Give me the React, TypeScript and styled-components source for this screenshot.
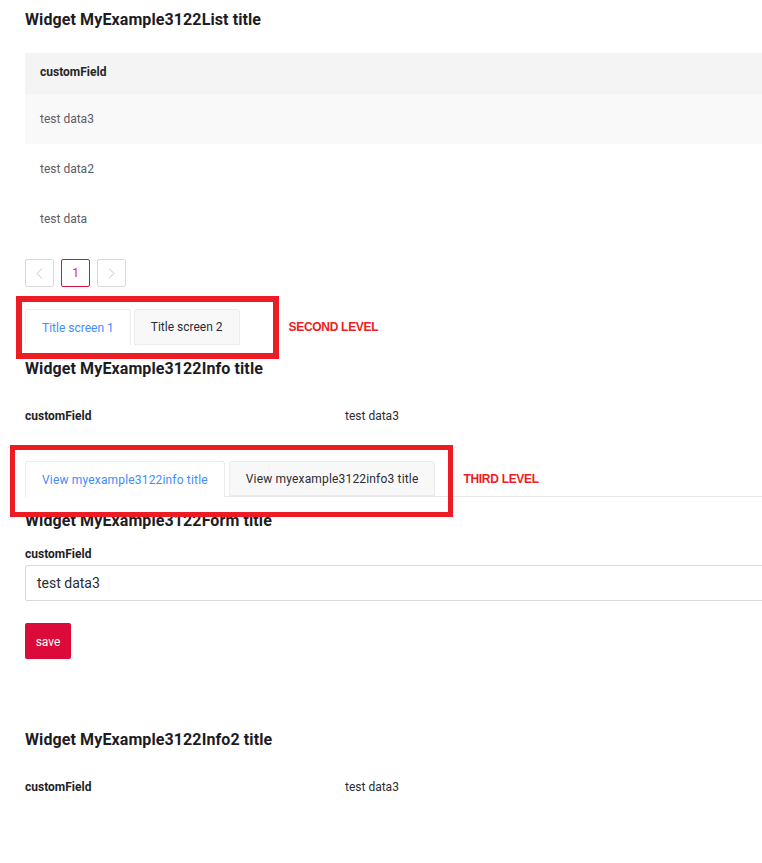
import React from "react";
import styled, { createGlobalStyle } from "styled-components";

const GlobalStyle = createGlobalStyle`
  html, body {
    margin: 0;
    padding: 0;
    background: #ffffff;
    overflow-x: hidden;
  }
  body {
    font-family: Roboto, "Liberation Sans", Arial, sans-serif;
    color: #262626;
  }
  * { box-sizing: border-box; }
`;

const Page = styled.div`
  width: 820px;
  padding: 8px 0 60px 25px;
  display: flex;
  flex-direction: column;
`;

const WidgetTitle = styled.h2<{ $mt?: number }>`
  margin: ${(p) => p.$mt ?? 0}px 0 0 0;
  font-size: 16px;
  line-height: 24px;
  font-weight: 700;
  letter-spacing: 0.1px;
  color: #1c1c24;
`;

const Table = styled.div`
  margin-top: 21px;
  display: flex;
  flex-direction: column;
`;

const HeaderRow = styled.div`
  height: 41px;
  background: #f4f4f4;
  display: flex;
  align-items: center;
  padding: 0 0 3px 15px;
  font-size: 12px;
  font-weight: 700;
  color: #262626;
  border-radius: 2px 0 0 0;
`;

const BodyRow = styled.div<{ $striped?: boolean }>`
  height: 50px;
  background: ${(p) => (p.$striped ? "#f9f9f9" : "#ffffff")};
  display: flex;
  align-items: center;
  padding-left: 15px;
  font-size: 12px;
  color: #5c5c66;
`;

const Pagination = styled.div`
  margin-top: 15px;
  display: flex;
  gap: 7px;
`;

const PageButton = styled.div<{ $active?: boolean }>`
  width: 29px;
  height: 28px;
  border: 1px solid ${(p) => (p.$active ? "#d0143c" : "#d9d9d9")};
  border-radius: 2px;
  display: flex;
  align-items: center;
  justify-content: center;
  font-size: 12px;
  color: ${(p) => (p.$active ? "#e0245e" : "#bfbfbf")};
  background: #fff;
`;

const TabsArea = styled.div<{ $mt: number }>`
  position: relative;
  margin-top: ${(p) => p.$mt}px;
`;

const TabBar = styled.div<{ $line?: boolean }>`
  display: flex;
  align-items: flex-end;
  height: 36px;
  border-bottom: ${(p) => (p.$line ? "1px solid #e8e8e8" : "none")};
`;

const Tab = styled.div<{ $active?: boolean; $line?: boolean }>`
  height: ${(p) => (p.$line ? (p.$active ? "36px" : "35px") : "36px")};
  margin-bottom: ${(p) => (p.$line && p.$active ? "-1px" : "0")};
  margin-right: ${(p) => (p.$line ? "4px" : "3px")};
  padding: 0 16px;
  display: flex;
  align-items: center;
  font-size: 12px;
  letter-spacing: ${(p) => (p.$line ? "0.17px" : "0")};
  border: 1px solid #ececec;
  border-bottom: ${(p) => (p.$active ? "none" : "1px solid #ececec")};
  border-radius: 3px 3px 0 0;
  background: ${(p) => (p.$active ? "#ffffff" : "#f8f8f8")};
  color: ${(p) => (p.$active ? "#3f8cff" : "#2b2b33")};
`;

const LevelLabel = styled.div<{ $ml: number }>`
  align-self: center;
  margin-left: ${(p) => p.$ml}px;
  font-family: "Liberation Sans", Arial, sans-serif;
  font-weight: 700;
  font-size: 12px;
  letter-spacing: -0.3px;
  color: #ed1c24;
`;

const Annotation = styled.div<{ $l: number; $t: number; $w: number; $h: number; $b: number }>`
  position: absolute;
  left: ${(p) => p.$l}px;
  top: ${(p) => p.$t}px;
  width: ${(p) => p.$w}px;
  height: ${(p) => p.$h}px;
  border: ${(p) => p.$b}px solid #ed1c24;
  pointer-events: none;
  z-index: 2;
`;

const InfoRow = styled.div<{ $mt: number }>`
  margin-top: ${(p) => p.$mt}px;
  height: 40px;
  display: grid;
  grid-template-columns: 320px 1fr;
  align-items: center;
  font-size: 12px;
`;

const InfoLabel = styled.div`
  font-weight: 700;
  color: #1f1f26;
`;

const InfoValue = styled.div`
  color: #2b2b33;
`;

const FieldLabel = styled.label`
  margin-top: 12px;
  font-size: 12px;
  line-height: 18px;
  font-weight: 700;
  color: #1f1f26;
`;

const TextInput = styled.div`
  margin-top: 2px;
  height: 36px;
  border: 1px solid #d9d9d9;
  border-radius: 2px;
  display: flex;
  align-items: center;
  padding-left: 11px;
  font-size: 14px;
  color: #2b2b33;
`;

const SaveButton = styled.button`
  margin-top: 22px;
  align-self: flex-start;
  width: 46px;
  height: 36px;
  border: none;
  border-radius: 2px;
  background: #dc0a38;
  color: #ffffff;
  font-family: Roboto, sans-serif;
  font-size: 12px;
  padding: 2px 0 0 0;
`;

const Chevron = ({ dir }: { dir: "left" | "right" }) => (
  <svg width="7" height="11" viewBox="0 0 7 11" fill="none">
    <path
      d={dir === "left" ? "M6 0.5 L1 5.5 L6 10.5" : "M1 0.5 L6 5.5 L1 10.5"}
      stroke="#c4c4c4"
      strokeWidth="1"
    />
  </svg>
);

export default function App() {
  return (
    <>
      <GlobalStyle />
      <Page>
        <WidgetTitle>Widget MyExample3122List title</WidgetTitle>
        <Table>
          <HeaderRow>customField</HeaderRow>
          <BodyRow $striped>test data3</BodyRow>
          <BodyRow>test data2</BodyRow>
          <BodyRow>test data</BodyRow>
        </Table>
        <Pagination>
          <PageButton><Chevron dir="left" /></PageButton>
          <PageButton $active>1</PageButton>
          <PageButton><Chevron dir="right" /></PageButton>
        </Pagination>

        <TabsArea $mt={22}>
          <TabBar>
            <Tab $active>Title screen 1</Tab>
            <Tab>Title screen 2</Tab>
            <LevelLabel $ml={46}>SECOND LEVEL</LevelLabel>
          </TabBar>
          <Annotation $l={-9} $t={-13} $w={263} $h={63} $b={6} />
        </TabsArea>

        <WidgetTitle $mt={12}>Widget MyExample3122Info title</WidgetTitle>
        <InfoRow $mt={15}>
          <InfoLabel>customField</InfoLabel>
          <InfoValue>test data3</InfoValue>
        </InfoRow>

        <TabsArea $mt={25}>
          <TabBar $line>
            <Tab $active $line>View myexample3122info title</Tab>
            <Tab $line>View myexample3122info3 title</Tab>
            <LevelLabel $ml={24}>THIRD LEVEL</LevelLabel>
          </TabBar>
          <Annotation $l={-15} $t={-16} $w={443} $h={72} $b={5} />
        </TabsArea>

        <WidgetTitle $mt={12}>Widget MyExample3122Form title</WidgetTitle>
        <FieldLabel>customField</FieldLabel>
        <TextInput>test data3</TextInput>
        <SaveButton>save</SaveButton>

        <WidgetTitle $mt={69}>Widget MyExample3122Info2 title</WidgetTitle>
        <InfoRow $mt={15}>
          <InfoLabel>customField</InfoLabel>
          <InfoValue>test data3</InfoValue>
        </InfoRow>
      </Page>
    </>
  );
}
